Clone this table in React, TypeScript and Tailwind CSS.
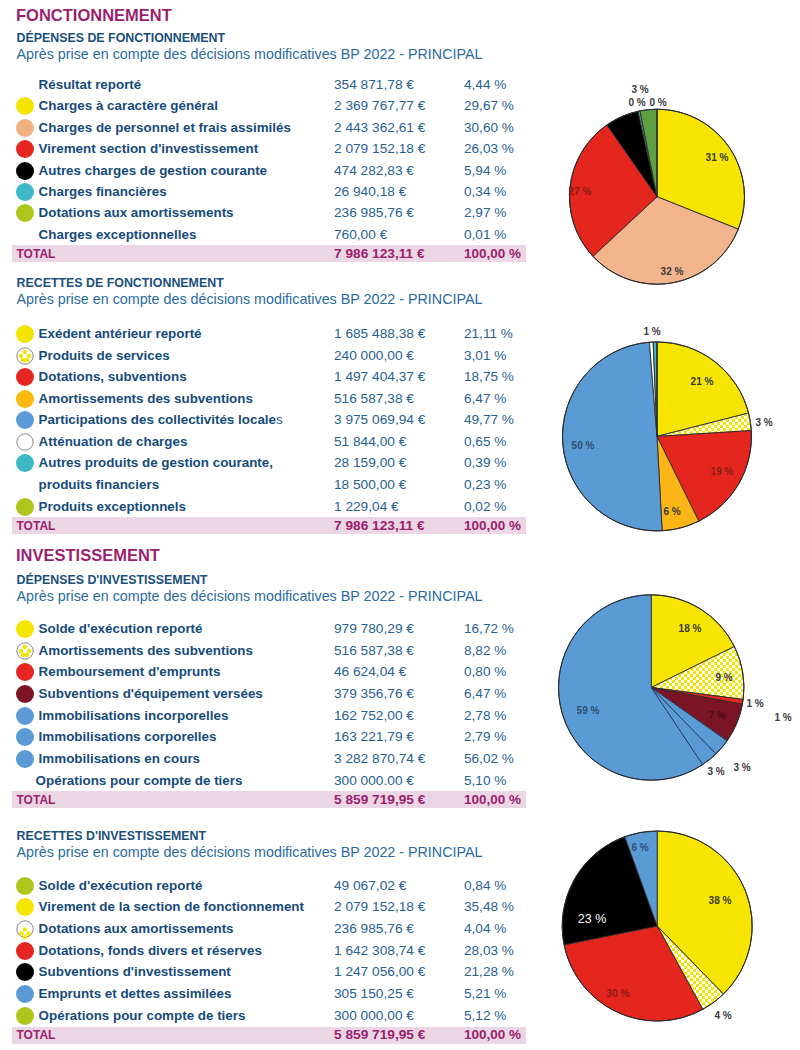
import React from "react";

type Icon = "none" | "yellow" | "peach" | "red" | "black" | "teal" | "green" | "orange" | "blue" | "maroon" | "white" | "dots" | "dots2";

type Row = { icon: Icon; label: React.ReactNode; amount: string; pct: string; shift?: boolean };

const DOT: Record<string, string> = {
  yellow: "#f4e500",
  peach: "#f2b083",
  red: "#e52521",
  black: "#000000",
  teal: "#3db9c6",
  green: "#aec61c",
  orange: "#fbb80f",
  blue: "#5b9bd5",
  maroon: "#7b1425",
};

function LegendIcon({ icon }: { icon: Icon }) {
  if (icon === "none") return <span className="block w-[18px] h-[18px]" />;
  if (icon === "white")
    return (
      <svg width="18" height="18" viewBox="0 0 18 18">
        <circle cx="9" cy="9" r="8.2" fill="#fff" stroke="#8a8a8a" strokeWidth="1" />
      </svg>
    );
  if (icon === "dots")
    return (
      <svg width="18" height="18" viewBox="0 0 18 18">
        <circle cx="9" cy="9" r="8.2" fill="#fff" stroke="#8a8a8a" strokeWidth="1" />
        <circle cx="9" cy="5" r="2.2" fill="#f4e500" />
        <circle cx="5" cy="9" r="2.2" fill="#f4e500" />
        <circle cx="13" cy="9" r="2.2" fill="#f4e500" />
        <circle cx="7" cy="13" r="2.2" fill="#f4e500" />
        <circle cx="11" cy="13" r="2.2" fill="#f4e500" />
      </svg>
    );
  if (icon === "dots2")
    return (
      <svg width="18" height="18" viewBox="0 0 18 18" overflow="visible">
        <circle cx="9" cy="9" r="8.2" fill="#fff" stroke="#8a8a8a" strokeWidth="1" />
        <circle cx="9" cy="9.5" r="2.2" fill="#f4e500" />
        <circle cx="5.5" cy="13.5" r="2.2" fill="#f4e500" />
        <circle cx="12.5" cy="13.5" r="2.2" fill="#f4e500" />
        <circle cx="9" cy="17" r="2.2" fill="#f4e500" />
      </svg>
    );
  return (
    <svg width="18" height="18" viewBox="0 0 18 18">
      <circle cx="9" cy="9" r="9" fill={DOT[icon]} />
    </svg>
  );
}

function TableRow({ row, h }: { row: Row; h: string }) {
  return (
    <div className={`flex items-center ${h}`}>
      <div className="w-[38.6px] pl-[15.6px] flex items-center">
        <LegendIcon icon={row.icon} />
      </div>
      <div
        className={`w-[295.4px] text-[13.4px] leading-[16px] font-bold text-[#164b7b] whitespace-nowrap ${row.shift ? "-ml-[3px]" : ""}`}
      >
        {row.label}
      </div>
      <div className={`w-[130px] text-[13.7px] leading-[16px] text-[#2a6193] whitespace-nowrap ${row.shift ? "ml-[3px]" : ""}`}>
        {row.amount}
      </div>
      <div className="text-[13.6px] leading-[16px] text-[#2a6193] whitespace-nowrap">{row.pct}</div>
    </div>
  );
}

function TotalBar({ amount }: { amount: string }) {
  return (
    <div className="ml-[12px] w-[514px] h-[17px] bg-[#ebd6e4] flex items-center text-[#9b1f6e] font-bold whitespace-nowrap">
      <div className="w-[322px] pl-[4.5px] text-[12px] leading-[16px]">TOTAL</div>
      <div className="w-[130px] text-[13.7px] leading-[16px]">{amount}</div>
      <div className="text-[13.5px] leading-[16px]">100,00 %</div>
    </div>
  );
}

type Slice = { v: number; fill: string; stroke?: string };
type Lbl = { x: number; y: number; t: string; fill?: string; size?: number; bold?: boolean };

function pt(cx: number, cy: number, r: number, a: number) {
  const rad = (a * Math.PI) / 180;
  return [cx + r * Math.sin(rad), cy - r * Math.cos(rad)];
}

function Pie({
  id,
  cx,
  cy,
  r,
  slices,
  labels,
  height,
}: {
  id: string;
  cx: number;
  cy: number;
  r: number;
  slices: Slice[];
  labels: Lbl[];
  height: number;
}) {
  const total = slices.reduce((s, x) => s + x.v, 0);
  let a = 0;
  const paths = slices.map((s, i) => {
    const a0 = a;
    const a1 = a + (s.v / total) * 360;
    a = a1;
    const [x0, y0] = pt(cx, cy, r, a0);
    const [x1, y1] = pt(cx, cy, r, a1);
    const large = a1 - a0 > 180 ? 1 : 0;
    const d = `M ${cx} ${cy} L ${x0} ${y0} A ${r} ${r} 0 ${large} 1 ${x1} ${y1} Z`;
    const fill = s.fill === "checker" ? `url(#${id})` : s.fill;
    return <path key={i} d={d} fill={fill} stroke={s.stroke ?? "#2a2a2a"} strokeWidth="0.9" strokeLinejoin="round" />;
  });
  return (
    <svg width="260" height={height} viewBox={`0 0 260 ${height}`} overflow="visible" className="block shrink-0">
      <defs>
        <pattern id={id} width="6" height="6" patternUnits="userSpaceOnUse">
          <rect width="6" height="6" fill="#fff" />
          <rect x="0" y="0" width="3" height="3" fill="#f5e400" />
          <rect x="3" y="3" width="3" height="3" fill="#f5e400" />
        </pattern>
      </defs>
      {paths}
      <circle cx={cx} cy={cy} r={r} fill="none" stroke="#2a2a2a" strokeWidth="1" />
      {labels.map((l, i) => (
        <text
          key={i}
          x={l.x}
          y={l.y}
          textAnchor="middle"
          dominantBaseline="central"
          fontFamily="'Liberation Sans', Arial, sans-serif"
          fontSize={l.size ?? 10}
          fontWeight={l.bold === false ? 400 : 700}
          fill={l.fill ?? "#3a3a3a"}
        >
          {l.t}
        </text>
      ))}
    </svg>
  );
}

function Heading({ title }: { title: string }) {
  return (
    <>
      <div className="pl-[16.5px] h-[16px] leading-[16px] text-[12.4px] font-bold text-[#1b4f7d] whitespace-nowrap">{title}</div>
      <div className="pl-[16.5px] h-[16px] leading-[16px] text-[14.3px] text-[#2b6aa0] whitespace-nowrap">
        Après prise en compte des décisions modificatives BP 2022 - PRINCIPAL
      </div>
    </>
  );
}

const s1: Row[] = [
  { icon: "none", label: "Résultat reporté", amount: "354 871,78 €", pct: "4,44 %" },
  { icon: "yellow", label: "Charges à caractère général", amount: "2 369 767,77 €", pct: "29,67 %" },
  { icon: "peach", label: "Charges de personnel et frais assimilés", amount: "2 443 362,61 €", pct: "30,60 %" },
  { icon: "red", label: "Virement section d'investissement", amount: "2 079 152,18 €", pct: "26,03 %" },
  { icon: "black", label: "Autres charges de gestion courante", amount: "474 282,83 €", pct: "5,94 %" },
  { icon: "teal", label: "Charges financières", amount: "26 940,18 €", pct: "0,34 %" },
  { icon: "green", label: "Dotations aux amortissements", amount: "236 985,76 €", pct: "2,97 %" },
  { icon: "none", label: "Charges exceptionnelles", amount: "760,00 €", pct: "0,01 %" },
];

const s2: Row[] = [
  { icon: "yellow", label: "Exédent antérieur reporté", amount: "1 685 488,38 €", pct: "21,11 %" },
  { icon: "dots", label: "Produits de services", amount: "240 000,00 €", pct: "3,01 %" },
  { icon: "red", label: "Dotations, subventions", amount: "1 497 404,37 €", pct: "18,75 %" },
  { icon: "orange", label: "Amortissements des subventions", amount: "516 587,38 €", pct: "6,47 %" },
  {
    icon: "blue",
    label: (
      <>
        Participations des collectivités locale<span className="font-normal">s</span>
      </>
    ),
    amount: "3 975 069,94 €",
    pct: "49,77 %",
  },
  { icon: "white", label: "Atténuation de charges", amount: "51 844,00 €", pct: "0,65 %" },
  { icon: "teal", label: "Autres produits de gestion courante,", amount: "28 159,00 €", pct: "0,39 %" },
  { icon: "none", label: "produits financiers", amount: "18 500,00 €", pct: "0,23 %" },
  { icon: "green", label: "Produits exceptionnels", amount: "1 229,04 €", pct: "0,02 %" },
];

const s3: Row[] = [
  { icon: "yellow", label: "Solde d'exécution reporté", amount: "979 780,29 €", pct: "16,72 %" },
  { icon: "dots", label: "Amortissements des subventions", amount: "516 587,38 €", pct: "8,82 %" },
  { icon: "red", label: "Remboursement d'emprunts", amount: "46 624,04 €", pct: "0,80 %" },
  { icon: "maroon", label: "Subventions d'équipement versées", amount: "379 356,76 €", pct: "6,47 %" },
  { icon: "blue", label: "Immobilisations incorporelles", amount: "162 752,00 €", pct: "2,78 %" },
  { icon: "blue", label: "Immobilisations corporelles", amount: "163 221,79 €", pct: "2,79 %" },
  { icon: "blue", label: "Immobilisations en cours", amount: "3 282 870,74 €", pct: "56,02 %" },
  { icon: "none", label: "Opérations pour compte de tiers", amount: "300 000.00 €", pct: "5,10 %", shift: true },
];

const s4: Row[] = [
  { icon: "green", label: "Solde d'exécution reporté", amount: "49 067,02 €", pct: "0,84 %" },
  { icon: "yellow", label: "Virement de la section de fonctionnement", amount: "2 079 152,18 €", pct: "35,48 %" },
  { icon: "dots2", label: "Dotations aux amortissements", amount: "236 985,76 €", pct: "4,04 %" },
  { icon: "red", label: "Dotations, fonds divers et réserves", amount: "1 642 308,74 €", pct: "28,03 %" },
  { icon: "black", label: "Subventions d'investissement", amount: "1 247 056,00 €", pct: "21,28 %" },
  { icon: "blue", label: "Emprunts et dettes assimilées", amount: "305 150,25 €", pct: "5,21 %" },
  { icon: "green", label: "Opérations pour compte de tiers", amount: "300 000,00 €", pct: "5,12 %" },
];

const Y = "#f5e500";
const RED = "#e5261f";
const BLUE = "#5b9bd5";
const DARKRED = "#8b1c12";
const DARKBLUE = "#2d4f75";

export default function App() {
  return (
    <div className="w-[800px] h-[1050px] bg-white overflow-hidden font-['Liberation_Sans',Arial,sans-serif]">
      <div className="pt-[5px] pl-[16px] h-[25px] leading-[20px] text-[16.5px] font-bold text-[#9b1f6e]">FONCTIONNEMENT</div>

      {/* Section 1 */}
      <div className="mt-[5px] flex">
        <div className="w-[540px] shrink-0">
          <Heading title="DÉPENSES DE FONCTIONNEMENT" />
          <div className="mt-[12.3px]">
            {s1.map((r, i) => (
              <TableRow key={i} row={r} h="h-[21.4px]" />
            ))}
          </div>
          <TotalBar amount="7 986 123,11 €" />
        </div>
        <Pie
          id="chk1"
          height={230}
          cx={117}
          cy={166.7}
          r={87.5}
          slices={[
            { v: 29.67, fill: Y },
            { v: 30.6, fill: "#f2b48c" },
            { v: 26.03, fill: RED },
            { v: 5.94, fill: "#000" },
            { v: 0.34, fill: "#3fb8c4" },
            { v: 2.97, fill: "#5da044" },
            { v: 0.01, fill: "#ffffff" },
          ]}
          labels={[
            { x: 177, y: 127, t: "31 %" },
            { x: 132, y: 241, t: "32 %" },
            { x: 40, y: 161, t: "27 %", fill: DARKRED },
            { x: 100, y: 59, t: "3 %" },
            { x: 97, y: 72, t: "0 %" },
            { x: 118, y: 72, t: "0 %" },
          ]}
        />
      </div>

      {/* Section 2 */}
      <div className="mt-[12.8px] flex">
        <div className="w-[540px] shrink-0">
          <Heading title="RECETTES DE FONCTIONNEMENT" />
          <div className="mt-[15.9px]">
            {s2.map((r, i) => (
              <TableRow key={i} row={r} h="h-[21.6px]" />
            ))}
          </div>
          <TotalBar amount="7 986 123,11 €" />
        </div>
        <Pie
          id="chk2"
          height={250}
          cx={117}
          cy={161.4}
          r={94.5}
          slices={[
            { v: 21.11, fill: Y },
            { v: 3.01, fill: "checker" },
            { v: 18.75, fill: RED },
            { v: 6.47, fill: "#fbb516" },
            { v: 49.77, fill: BLUE },
            { v: 0.65, fill: "#ffffff" },
            { v: 0.62, fill: "#3fb8c4" },
            { v: 0.02, fill: "#5da044" },
          ]}
          labels={[
            { x: 112, y: 56.7, t: "1 %" },
            { x: 162, y: 106.7, t: "21 %" },
            { x: 224, y: 147.7, t: "3 %" },
            { x: 182, y: 196.7, t: "19 %", fill: DARKRED },
            { x: 132, y: 236.7, t: "6 %" },
            { x: 43, y: 170.7, t: "50 %", fill: DARKBLUE },
          ]}
        />
      </div>

      <div className="mt-[10.4px] pl-[16px] h-[20px] leading-[20px] text-[16.5px] font-bold text-[#9b1f6e]">INVESTISSEMENT</div>

      {/* Section 3 */}
      <div className="mt-[7px] flex">
        <div className="w-[540px] shrink-0">
          <Heading title="DÉPENSES D'INVESTISSEMENT" />
          <div className="mt-[14.15px]">
            {s3.map((r, i) => (
              <TableRow key={i} row={r} h="h-[21.7px]" />
            ))}
          </div>
          <TotalBar amount="5 859 719,95 €" />
        </div>
        <Pie
          id="chk3"
          height={230}
          cx={111.2}
          cy={115.5}
          r={92.7}
          slices={[
            { v: 16.72, fill: Y },
            { v: 8.82, fill: "checker" },
            { v: 0.8, fill: RED },
            { v: 6.47, fill: "#7b1425" },
            { v: 2.78, fill: BLUE, stroke: "#1f3a5f" },
            { v: 2.79, fill: BLUE, stroke: "#1f3a5f" },
            { v: 56.02, fill: BLUE, stroke: "#1f3a5f" },
          ]}
          labels={[
            { x: 150, y: 56, t: "18 %" },
            { x: 184, y: 105, t: "9 %" },
            { x: 215, y: 131, t: "1 %" },
            { x: 243, y: 145, t: "1 %" },
            { x: 177, y: 143, t: "7 %", fill: "#4a0f15" },
            { x: 176, y: 199, t: "3 %" },
            { x: 202, y: 195, t: "3 %" },
            { x: 48, y: 138, t: "59 %", fill: DARKBLUE },
          ]}
        />
      </div>

      {/* Section 4 */}
      <div className="mt-[19.25px] flex">
        <div className="w-[540px] shrink-0">
          <Heading title="RECETTES D'INVESTISSEMENT" />
          <div className="mt-[15.15px]">
            {s4.map((r, i) => (
              <TableRow key={i} row={r} h="h-[21.7px]" />
            ))}
          </div>
          <TotalBar amount="5 859 719,95 €" />
        </div>
        <Pie
          id="chk4"
          height={210}
          cx={117.2}
          cy={98}
          r={95}
          slices={[
            { v: 35.48, fill: Y },
            { v: 4.04, fill: "checker" },
            { v: 28.03, fill: RED },
            { v: 21.28, fill: "#000" },
            { v: 5.21, fill: BLUE },
          ]}
          labels={[
            { x: 180, y: 72, t: "38 %" },
            { x: 183, y: 187, t: "4 %" },
            { x: 78, y: 165, t: "30 %", fill: DARKRED },
            { x: 52, y: 91, t: "23 %", fill: "#ffffff", size: 12.5, bold: false },
            { x: 100, y: 19, t: "6 %", fill: DARKBLUE },
          ]}
        />
      </div>
    </div>
  );
}
